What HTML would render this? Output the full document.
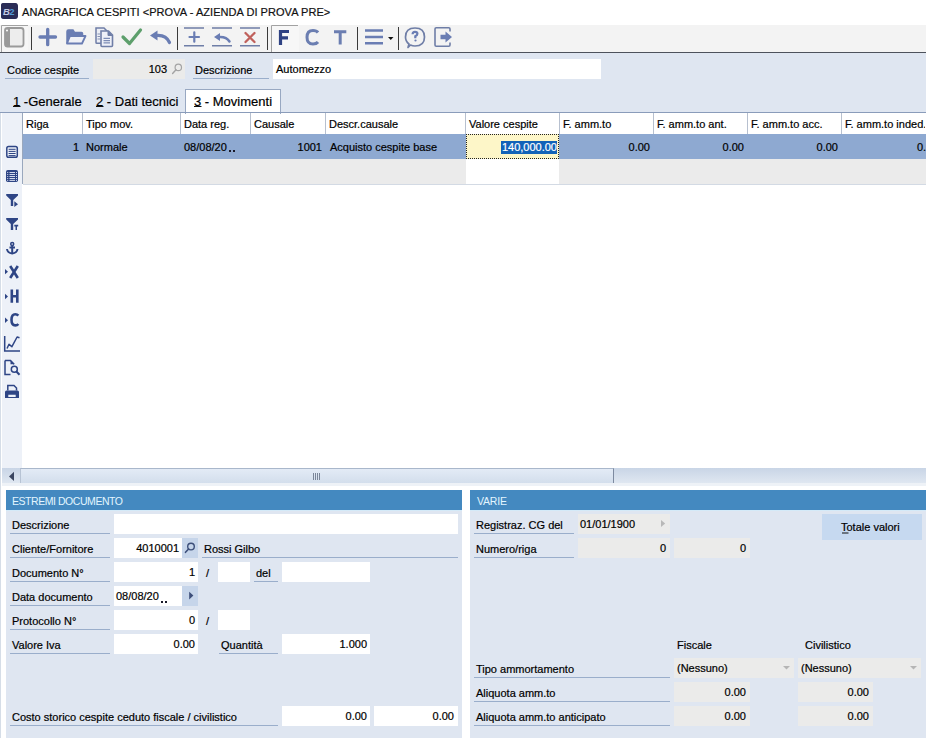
<!DOCTYPE html>
<html><head><meta charset="utf-8">
<style>
*{margin:0;padding:0;box-sizing:border-box}
html,body{width:927px;height:738px;overflow:hidden;background:#fff;font-family:"Liberation Sans",sans-serif;font-size:11px;color:#000}
.t{-webkit-text-stroke:0.2px currentColor}
.a{position:absolute}
.t{position:absolute;white-space:nowrap;line-height:13px;font-size:11px}
.r{text-align:right}
.lb{position:absolute;height:1px;background:#9aaecb}
.w{position:absolute;background:#fff}
.d{position:absolute;background:#ebebea}
.h{position:absolute;background:#4489c0}
.ht{position:absolute;white-space:nowrap;line-height:13px;font-size:11px;color:#e2f6ff}
.gh{position:absolute;top:113px;height:21px;border-left:1px solid #b7c0cf}
</style></head><body>
<!-- title -->
<div class="a" style="left:1px;top:3px;width:17px;height:16px;background:#2a2c55;border-radius:3px"></div>
<div class="t" style="left:22px;top:6px;font-size:11px;color:#111;letter-spacing:0.05px">ANAGRAFICA CESPITI &lt;PROVA - AZIENDA DI PROVA PRE&gt;</div>
<!-- toolbar -->
<div class="a" style="left:0;top:25px;width:926px;height:27px;background:#f3f3f3"></div>
<div class="a" style="left:0;top:52px;width:926px;height:1px;background:#4d525c"></div>

<svg class="a" style="left:0;top:0" width="927" height="53" viewBox="0 0 927 53">
<!-- logo -->
<rect x="1" y="3" width="16" height="15.8" rx="2.3" fill="#2b2d57"/>
<text x="3" y="15" font-family="Liberation Sans" font-style="italic" font-weight="bold" font-size="9.5" fill="#c4cbe6">B</text>
<text x="9.3" y="15" font-family="Liberation Sans" font-weight="bold" font-size="9.5" fill="#4f9ad8">2</text>
<!-- btn1 pressed -->
<rect x="1" y="25" width="27" height="27" fill="#f6f6f6"/>
<path d="M1.5,52 V25.5 H28" fill="none" stroke="#a2a2a2" stroke-width="1"/>
<rect x="5" y="28" width="18.5" height="18.5" rx="2.5" fill="#ededed" stroke="#9a9a9a" stroke-width="1.8"/>
<rect x="5" y="28" width="5" height="18.5" fill="#9a9a9a"/>
<circle cx="7" cy="30.5" r="1" fill="#fff"/>
<!-- separators -->
<g fill="#3a3a3a">
<rect x="31" y="27" width="1" height="23"/>
<rect x="177" y="27" width="1" height="23"/>
<rect x="267" y="27" width="1" height="23"/>
<rect x="357" y="27" width="1" height="23"/>
<rect x="398" y="27" width="1" height="23"/>
</g>
<!-- plus -->
<path d="M40,37 H55.5 M47.7,29.3 V44.7" stroke="#6a7db3" stroke-width="3.3" stroke-linecap="round"/>
<!-- folder -->
<path d="M67,43.5 V31.5 Q67,30 68.5,30 H73 L74.5,32.5 H81.5 Q82.5,32.5 82.5,33.5 V36" fill="#6a7db3" stroke="#6a7db3" stroke-width="1.5"/>
<path d="M67,43.5 L70,36 H85.5 L82,43.5 Z" fill="#f0f1f6" stroke="#6a7db3" stroke-width="1.8" stroke-linejoin="round"/>
<!-- copy -->
<path d="M96,28 H104 L107.5,31.5 V42.5 Q107.5,43.3 106.7,43.3 H96.8 Q96,43.3 96,42.5 Z" fill="#eceef5" stroke="#6f7ea7" stroke-width="1.5"/>
<path d="M101,31 H108.5 L112.5,35 V45.5 Q112.5,46.5 111.5,46.5 H102 Q101,46.5 101,45.5 Z" fill="#eef0f8" stroke="#6f7ea7" stroke-width="1.6"/>
<path d="M108,31 V35.5 H112.5" fill="#6f7ea7" stroke="#6f7ea7" stroke-width="1"/>
<path d="M103.5,38.3 H110 M103.5,40.6 H110 M103.5,42.9 H110" stroke="#7d8cb5" stroke-width="1.3"/>
<path d="M97.5,34 H100 M97.5,36.5 H100 M97.5,39 H100" stroke="#8592b5" stroke-width="1"/>
<!-- check -->
<path d="M123,37 L129.5,43.5 L140.5,30" fill="none" stroke="#5d9f6c" stroke-width="3.2" stroke-linecap="round" stroke-linejoin="round"/>
<!-- undo -->
<path d="M150,35.5 L157.5,30.5 V40.5 Z" fill="#6a7db3"/>
<path d="M156,35.5 Q166,34.5 169.5,42.5" fill="none" stroke="#6a7db3" stroke-width="3.2" stroke-linecap="round"/>
<!-- line icons -->
<g stroke="#6f7ea7" stroke-width="1.6">
<path d="M184,28 H204 M184,45.8 H204"/>
<path d="M212,28 H232 M212,45.8 H232"/>
<path d="M240,28 H260 M240,45.8 H260"/>
</g>
<path d="M189.5,37 H199 M194.3,32.3 V41.7" stroke="#6a7db3" stroke-width="2.2" stroke-linecap="round"/>
<path d="M214,37 L220,33 V41 Z" fill="#6a7db3"/>
<path d="M219,37 Q226.5,36.5 229.5,41.5" fill="none" stroke="#6a7db3" stroke-width="2.5" stroke-linecap="round"/>
<path d="M245.5,33 L254.5,42 M254.5,33 L245.5,42" stroke="#c0615c" stroke-width="2.3" stroke-linecap="round"/>
<!-- F pressed -->
<rect x="271" y="25" width="28" height="27" fill="#f7f7f7"/>
<path d="M271.5,52 V25.5 H298" fill="none" stroke="#a2a2a2" stroke-width="1"/>
<path d="M280.5,45 V31.5 H289 M280.5,37.8 H288" fill="none" stroke="#2f4283" stroke-width="3.2"/>
<!-- C T -->
<path d="M318,32.5 Q316.5,30.5 313,30.5 Q307,30.5 307,37.3 Q307,44 313,44 Q316.5,44 318,42" fill="none" stroke="#6b7eb1" stroke-width="3"/>
<path d="M334,31.8 H346.3 M340.2,31.8 V44.5" fill="none" stroke="#6b7eb1" stroke-width="3"/>
<!-- hamburger -->
<path d="M365,30.5 H383 M365,37 H383 M365,43.3 H383" stroke="#6a7db3" stroke-width="2.6"/>
<path d="M388,37 H393.5 L390.75,40 Z" fill="#111"/>
<!-- help -->
<path d="M409,44 Q405.5,41.5 405.5,37 Q405.5,28 415,28 Q424.5,28 424.5,37 Q424.5,46 415,46 Q412.5,46 410.5,45 L408,47.5 Z" fill="none" stroke="#6f7ea7" stroke-width="1.7" stroke-linejoin="round"/>
<path d="M412.6,34.2 Q412.6,31.8 415,31.8 Q417.4,31.8 417.4,33.8 Q417.4,35.3 415.3,36.3 V38.3" fill="none" stroke="#6a7db3" stroke-width="2.2"/>
<circle cx="415.5" cy="40.5" r="1.1" fill="#6a7db3"/>
<!-- exit -->
<path d="M450,31.5 V29 Q450,27.8 448.8,27.8 H436.2 Q435,27.8 435,29 V45 Q435,46.2 436.2,46.2 H448.8 Q450,46.2 450,45 V42.5" fill="none" stroke="#6f7ea7" stroke-width="1.6"/>
<path d="M440.5,34.8 H445.5 V31.5 L452,37 L445.5,42.5 V39.2 H440.5 Z" fill="#6a7db3"/>
</svg>
<!-- form -->
<div class="a" style="left:0;top:53px;width:926px;height:60px;background:#dfe6f1"></div>
<div class="t" style="left:7px;top:64px">Codice cespite</div>
<div class="lb" style="left:5px;top:78px;width:84px"></div>
<div class="d" style="left:93px;top:59px;width:92px;height:20px"></div>
<div class="t r" style="left:120px;top:63px;width:47px">103</div>
<div class="t" style="left:195px;top:64px">Descrizione</div>
<div class="lb" style="left:193px;top:78px;width:76px"></div>
<div class="w" style="left:273px;top:59px;width:328px;height:20px"></div>
<div class="t" style="left:276px;top:63px">Automezzo</div>
<div class="t" style="left:13px;top:94px;font-size:13px;line-height:15px">1 -Generale</div>
<div class="t" style="left:96px;top:94px;font-size:13px;line-height:15px">2 - Dati tecnici</div>
<div class="a" style="left:185px;top:89px;width:96px;height:25px;background:#fff;border:1px solid #98a8c2;border-bottom:none"></div>
<div class="t" style="left:194px;top:94px;font-size:13px;line-height:15px">3 - Movimenti</div>
<div class="a" style="left:0;top:112px;width:926px;height:1px;background:#8a9cba"></div>
<!-- grid -->
<div class="a" style="left:0;top:113px;width:1px;height:625px;background:#d5dde7"></div>
<div class="a" style="left:2px;top:113px;width:20px;height:356px;background:#edf1f8"></div>
<div class="a" style="left:22px;top:113px;width:1px;height:71px;background:#9aa8bd"></div>
<div class="gh" style="left:82px;width:98px"></div>
<div class="gh" style="left:180px;width:70px"></div>
<div class="gh" style="left:250px;width:75px"></div>
<div class="gh" style="left:325px;width:140px"></div>
<div class="gh" style="left:465px;width:94px"></div>
<div class="gh" style="left:559px;width:94px"></div>
<div class="gh" style="left:653px;width:94px"></div>
<div class="gh" style="left:747px;width:94px"></div>
<div class="gh" style="left:841px;width:85px"></div>
<div class="t" style="left:26px;top:118px">Riga</div>
<div class="t" style="left:86px;top:118px">Tipo mov.</div>
<div class="t" style="left:184px;top:118px">Data reg.</div>
<div class="t" style="left:254px;top:118px">Causale</div>
<div class="t" style="left:329px;top:118px">Descr.causale</div>
<div class="t" style="left:469px;top:118px">Valore cespite</div>
<div class="t" style="left:563px;top:118px">F. amm.to</div>
<div class="t" style="left:657px;top:118px">F. amm.to ant.</div>
<div class="t" style="left:751px;top:118px">F. amm.to acc.</div>
<div class="a" style="left:841px;top:113px;width:84px;height:21px;overflow:hidden"><div class="t" style="left:4px;top:5px">F. amm.to inded.</div></div>
<div class="a" style="left:23px;top:134px;width:903px;height:25px;background:#8ea9d1"></div>
<div class="a" style="left:23px;top:159px;width:903px;height:25px;background:#ebebeb"></div>
<div class="a" style="left:466px;top:159px;width:93px;height:25px;background:#fff"></div>
<div class="a" style="left:23px;top:184px;width:903px;height:1px;background:#d3dae4"></div>
<div class="a" style="left:466px;top:134px;width:93px;height:25px;background:#fdf6c8;border:1px dotted #222"></div>
<div class="a" style="left:501px;top:141px;width:56px;height:13px;background:#1262b8"></div>
<div class="t r" style="left:26px;top:141px;width:53px">1</div>
<div class="t" style="left:86px;top:141px">Normale</div>
<div class="t" style="left:184px;top:141px">08/08/20</div>

<div class="t r" style="left:254px;top:141px;width:68px">1001</div>
<div class="t" style="left:330px;top:141px">Acquisto cespite base</div>
<div class="t r" style="left:470px;top:141px;width:87px;color:#fff">140,000.00</div>
<div class="t r" style="left:563px;top:141px;width:87px">0.00</div>
<div class="t r" style="left:657px;top:141px;width:87px">0.00</div>
<div class="t r" style="left:751px;top:141px;width:87px">0.00</div>
<div class="a" style="left:841px;top:134px;width:85px;height:25px;overflow:hidden"><div class="t" style="left:76px;top:7px">0.00</div></div>

<svg class="a" style="left:0;top:141px" width="24" height="262" viewBox="0 140 24 262">
<g fill="none" stroke="#2e4585">
<rect x="6.8" y="145.5" width="10.5" height="10.8" rx="1.8" stroke-width="1.5"/>
<path d="M8.6,148.3 H15.6 M8.6,150.4 H15.6 M8.6,152.5 H15.6 M8.6,154.6 H15.6" stroke-width="1"/>
</g>
<rect x="6" y="169" width="12" height="12" rx="1.8" fill="#2e4585"/>
<g stroke="#e6ebf7" stroke-width="0.9">
<path d="M9.5,171.5 H15 M9.5,173.5 H15 M9.5,175.5 H15 M9.5,177.5 H15 M9.5,179.4 H15"/>
<path d="M7.2,171.5 H8.2 M7.2,173.5 H8.2 M7.2,175.5 H8.2 M7.2,177.5 H8.2 M7.2,179.4 H8.2 M16,171.5 H17 M16,173.5 H17 M16,175.5 H17 M16,177.5 H17 M16,179.4 H17"/>
</g>
<g fill="#2e4585">
<path d="M6.2,193 H18 V194.5 L13.2,199 V205 H10.8 V199 L6.2,194.5 Z"/>
<path d="M14.3,200.3 L18,203.2 L14.3,206 Z"/>
<path d="M6.2,217 H18 V218.5 L13.2,223 V229 H10.8 V223 L6.2,218.5 Z"/>
<path d="M14.3,223.8 H18.2 V225.5 H17 V229 H15.5 V225.5 H14.3 Z"/>
</g>
<g fill="none" stroke="#2e4585" stroke-width="2">
<circle cx="12.2" cy="243" r="1.5" stroke-width="1.5"/>
<path d="M12.2,244.5 V252 M9.5,246.5 H15"/>
<path d="M7,248 Q7.5,252 12.2,252.5 Q17,252 17.5,248" />
</g>
<g fill="#2e4585">
<path d="M5,268 L8,270.7 L5,273.3 Z"/>
<path d="M5,292.8 L8,295.5 L5,298.2 Z"/>
<path d="M5,316.5 L8,319.2 L5,321.9 Z"/>
</g>
<g fill="none" stroke="#2e4585" stroke-width="2.6">
<path d="M10.2,265 L17.8,277 M17.8,265 L10.2,277"/>
<path d="M11.8,288.5 V301.7 M17.3,288.5 V301.7 M11.8,295.2 H17.3"/>
<path d="M18.3,314.6 Q17.2,313.2 15.3,313.2 Q11.5,313.2 11.5,318.8 Q11.5,324.4 15.3,324.4 Q17.2,324.4 18.3,323"/>
</g>
<g fill="none" stroke="#2e4585" stroke-width="1.5">
<path d="M4.7,335 V350 H20"/>
<path d="M7,347.5 L9,343.3 L11.9,345.7 L17.1,336 L19.5,336.8" stroke-linejoin="round"/>
<path d="M5,359.5 H10.5 L14.2,363.2 M5,359.5 V373.5 H10.5"/>
<circle cx="14.3" cy="368.3" r="3"/>
<path d="M16.4,370.5 L19.5,373.8" stroke-width="2"/>
<path d="M7.8,389.5 V384.5 H14 L16.5,387 V389.5"/>
</g>
<path d="M10.5,359.5 L14.2,363.2 H10.5 Z" fill="#2e4585"/>
<path d="M6.5,389.5 H17.5 Q19,389.5 19,391 V397 H5 V391 Q5,389.5 6.5,389.5 Z M8.3,393.8 V396 H15.7 V393.8 Z" fill="#2e4585" fill-rule="evenodd"/>
</svg>
<!-- scrollbar -->
<div class="a" style="left:2px;top:468px;width:924px;height:15px;background:linear-gradient(#c9d5e6,#dfe7f1)"></div>
<div class="a" style="left:2px;top:483px;width:924px;height:3px;background:#eef2f7"></div>
<div class="a" style="left:20px;top:468px;width:594px;height:15px;background:linear-gradient(#e3ebf6,#d3deec);border-top:1px solid #a9b7cb;border-right:1px solid #7d8aa0;border-left:1px solid #b7c3d4"></div>
<!-- bottom panels -->
<div class="a" style="left:6px;top:490px;width:456px;height:248px;background:#dfe6f1"></div>
<div class="h" style="left:6px;top:490px;width:456px;height:20px"></div>
<div class="ht" style="left:12px;top:495px;font-size:10.5px;letter-spacing:-0.45px">ESTREMI DOCUMENTO</div>
<div class="a" style="left:6px;top:510px;width:456px;height:1px;background:#d4eaf8"></div>
<div class="a" style="left:470px;top:490px;width:456px;height:248px;background:#dfe6f1"></div>
<div class="h" style="left:470px;top:490px;width:456px;height:20px"></div>
<div class="ht" style="left:477px;top:495px;font-size:10.5px;letter-spacing:-0.2px">VARIE</div>
<div class="a" style="left:470px;top:510px;width:456px;height:1px;background:#d4eaf8"></div>

<!-- left panel fields -->
<div class="t" style="left:12px;top:519px">Descrizione</div>
<div class="lb" style="left:10px;top:533px;width:100px"></div>
<div class="w" style="left:114px;top:514px;width:344px;height:20px"></div>
<div class="t" style="left:12px;top:543px">Cliente/Fornitore</div>
<div class="lb" style="left:10px;top:557px;width:100px"></div>
<div class="w" style="left:114px;top:538px;width:68px;height:20px"></div>
<div class="t r" style="left:114px;top:542px;width:65px">4010001</div>
<div class="a" style="left:182px;top:538px;width:16px;height:20px;background:#c6d5ea"></div>
<div class="t" style="left:204px;top:543px">Rossi Gilbo</div>
<div class="lb" style="left:202px;top:557px;width:256px"></div>
<div class="t" style="left:12px;top:567px">Documento N°</div>
<div class="lb" style="left:10px;top:581px;width:100px"></div>
<div class="w" style="left:114px;top:562px;width:84px;height:20px"></div>
<div class="t r" style="left:114px;top:566px;width:81px">1</div>
<div class="t" style="left:206px;top:567px">/</div>
<div class="w" style="left:218px;top:562px;width:32px;height:20px"></div>
<div class="t" style="left:256px;top:567px">del</div>
<div class="lb" style="left:254px;top:581px;width:24px"></div>
<div class="w" style="left:282px;top:562px;width:88px;height:20px"></div>
<div class="t" style="left:12px;top:591px">Data documento</div>
<div class="lb" style="left:10px;top:605px;width:100px"></div>
<div class="w" style="left:114px;top:586px;width:68px;height:20px"></div>
<div class="t" style="left:116px;top:590px">08/08/20</div>

<div class="a" style="left:182px;top:586px;width:16px;height:20px;background:#c6d5ea"></div>
<div class="t" style="left:12px;top:615px">Protocollo N°</div>
<div class="lb" style="left:10px;top:629px;width:100px"></div>
<div class="w" style="left:114px;top:610px;width:84px;height:20px"></div>
<div class="t r" style="left:114px;top:614px;width:81px">0</div>
<div class="t" style="left:206px;top:615px">/</div>
<div class="w" style="left:218px;top:610px;width:32px;height:20px"></div>
<div class="t" style="left:12px;top:639px">Valore Iva</div>
<div class="lb" style="left:10px;top:653px;width:100px"></div>
<div class="w" style="left:114px;top:634px;width:84px;height:20px"></div>
<div class="t r" style="left:114px;top:638px;width:81px">0.00</div>
<div class="t" style="left:221px;top:639px">Quantità</div>
<div class="lb" style="left:219px;top:653px;width:59px"></div>
<div class="w" style="left:282px;top:634px;width:88px;height:20px"></div>
<div class="t r" style="left:282px;top:638px;width:85px">1.000</div>
<div class="t" style="left:12px;top:711px">Costo storico cespite ceduto fiscale / civilistico</div>
<div class="lb" style="left:10px;top:725px;width:268px"></div>
<div class="w" style="left:282px;top:706px;width:88px;height:20px"></div>
<div class="t r" style="left:282px;top:710px;width:85px">0.00</div>
<div class="w" style="left:374px;top:706px;width:84px;height:20px"></div>
<div class="t r" style="left:374px;top:710px;width:80px">0.00</div>
<!-- right panel fields -->
<div class="t" style="left:476px;top:519px">Registraz. CG del</div>
<div class="lb" style="left:474px;top:533px;width:100px"></div>
<div class="d" style="left:578px;top:514px;width:92px;height:20px"></div>
<div class="t" style="left:580px;top:518px">01/01/1900</div>
<div class="a" style="left:822px;top:514px;width:100px;height:26px;background:#c6d9f0"></div>
<div class="t" style="left:841px;top:521px">Totale valori</div>
<div class="t" style="left:476px;top:543px">Numero/riga</div>
<div class="lb" style="left:474px;top:557px;width:100px"></div>
<div class="d" style="left:578px;top:538px;width:92px;height:20px"></div>
<div class="t r" style="left:578px;top:542px;width:88px">0</div>
<div class="d" style="left:674px;top:538px;width:76px;height:20px"></div>
<div class="t r" style="left:674px;top:542px;width:72px">0</div>
<div class="t" style="left:677px;top:639px">Fiscale</div>
<div class="t" style="left:805px;top:639px">Civilistico</div>
<div class="t" style="left:476px;top:663px">Tipo ammortamento</div>
<div class="lb" style="left:474px;top:677px;width:196px"></div>
<div class="d" style="left:674px;top:658px;width:120px;height:20px"></div>
<div class="t" style="left:677px;top:662px">(Nessuno)</div>
<div class="d" style="left:798px;top:658px;width:123px;height:20px"></div>
<div class="t" style="left:801px;top:662px">(Nessuno)</div>
<div class="t" style="left:476px;top:687px">Aliquota amm.to</div>
<div class="lb" style="left:474px;top:701px;width:196px"></div>
<div class="d" style="left:674px;top:682px;width:76px;height:20px"></div>
<div class="t r" style="left:674px;top:686px;width:72px">0.00</div>
<div class="d" style="left:798px;top:682px;width:75px;height:20px"></div>
<div class="t r" style="left:798px;top:686px;width:71px">0.00</div>
<div class="t" style="left:476px;top:711px">Aliquota amm.to anticipato</div>
<div class="lb" style="left:474px;top:725px;width:196px"></div>
<div class="d" style="left:674px;top:706px;width:76px;height:20px"></div>
<div class="t r" style="left:674px;top:710px;width:72px">0.00</div>
<div class="d" style="left:798px;top:706px;width:75px;height:20px"></div>
<div class="t r" style="left:798px;top:710px;width:71px">0.00</div>

<svg class="a" style="left:0;top:0" width="927" height="738" viewBox="0 0 927 738">
<!-- magnifier 103 -->
<circle cx="178.3" cy="67.4" r="3.2" fill="none" stroke="#a3a3a3" stroke-width="1.2"/>
<path d="M176,69.8 L172.6,73.5" stroke="#a3a3a3" stroke-width="1.4" stroke-linecap="round"/>
<!-- tab underlines -->
<path d="M13,106.5 H20.5 M96,106.5 H103.5 M194,106.5 H201.5" stroke="#111" stroke-width="1"/>
<!-- scroll arrow -->
<path d="M9,476.4 L14,471.8 V481 Z" fill="#3b4661"/>
<!-- grip -->
<path d="M313.5,473 V480 M315.5,473 V480 M317.5,473 V480 M319.5,473 V480" stroke="#7b8699" stroke-width="1"/>
<!-- cliente magnifier -->
<circle cx="191" cy="546.6" r="3.3" fill="none" stroke="#3d4f7a" stroke-width="1.4"/>
<path d="M188.6,549 L185.5,552.3" stroke="#3d4f7a" stroke-width="1.6" stroke-linecap="round"/>
<!-- data doc arrow -->
<path d="M189.2,591.7 L193.4,595.6 L189.2,599.6 Z" fill="#3d4f7a"/>
<!-- registraz arrow -->
<path d="M661,520 L665.2,523.5 L661,527 Z" fill="#b8b8b8"/>
<!-- combo arrows -->
<path d="M783,666 H790 L786.5,669.5 Z" fill="#b5b5b5"/>
<path d="M910,666 H917 L913.5,669.5 Z" fill="#b5b5b5"/>
<!-- dots -->
<path d="M229,150 h2 v2 h-2 Z M233,150 h2 v2 h-2 Z M161,601 h2 v2 h-2 Z M165,601 h2 v2 h-2 Z" fill="#1a1a2a"/>
<!-- Totale underline -->
<path d="M842,533 H848.5" stroke="#111" stroke-width="1"/>
</svg>
</body></html>
